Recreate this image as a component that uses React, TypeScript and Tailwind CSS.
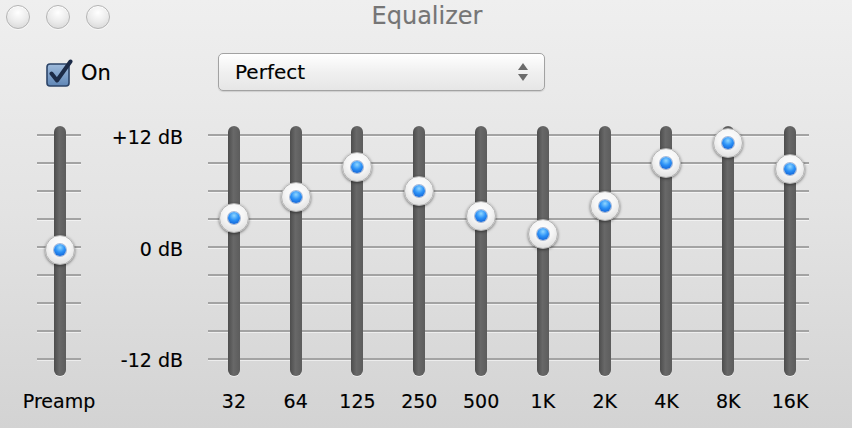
import React from 'react'

// ─── Data ─────────────────────────────────────────────────────────────────────

const BANDS: { label: string; db: number }[] = [
  { label: '32', db: 3.1 },
  { label: '64', db: 5.4 },
  { label: '125', db: 8.6 },
  { label: '250', db: 6 },
  { label: '500', db: 3.3 },
  { label: '1K', db: 1.4 },
  { label: '2K', db: 4.4 },
  { label: '4K', db: 9 },
  { label: '8K', db: 11.1 },
  { label: '16K', db: 8.4 },
]

const PREAMP_DB = -0.3
const TICKS = Array.from({ length: 9 })

// track is 250px tall, 0 dB sits 121px down, 12 dB = 112px
function knobTop(db: number) {
  return 121 - db * (112 / 12) - 15
}

// ─── Pieces ───────────────────────────────────────────────────────────────────

function TrafficLight() {
  return (
    <div className="w-[24px] h-[24px] rounded-full border border-[#b4b4b4] bg-[radial-gradient(circle_at_50%_30%,#ffffff_0%,#ececec_50%,#d2d2d2_100%)] shadow-[inset_0_1px_1px_rgba(255,255,255,0.9),0_1px_0_rgba(255,255,255,0.6)]" />
  )
}

function TickLines() {
  return (
    <div className="col-start-1 row-start-1 flex flex-col pt-[8px] gap-[26px]">
      {TICKS.map((_, i) => (
        <div key={i} className="h-[2px] bg-[#a3a3a3] shadow-[0_1px_0_rgba(255,255,255,0.55)]" />
      ))}
    </div>
  )
}

function Slider({ db }: { db: number }) {
  return (
    <div className="relative w-[12px] h-[250px] rounded-full bg-[linear-gradient(to_right,#4d4d4d,#686868_45%,#5c5c5c)] shadow-[0_1px_0_rgba(255,255,255,0.5)]">
      <div
        className="absolute left-1/2 -translate-x-1/2 w-[30px] h-[30px] rounded-full border border-[#b3b3b3] bg-[radial-gradient(circle_at_50%_35%,#ffffff_0%,#f5f5f5_45%,#d4d4d4_100%)] shadow-[0_1px_3px_rgba(0,0,0,0.5)] flex items-center justify-center"
        style={{ top: knobTop(db) }}
      >
        <div className="w-[12px] h-[12px] rounded-full bg-[radial-gradient(circle_at_50%_30%,#8fd6ff_0%,#2c92f7_45%,#0a52c9_100%)] shadow-[0_0_0_1px_rgba(10,60,150,0.35)]" />
      </div>
    </div>
  )
}

function CheckBox() {
  return (
    <svg width="28" height="28" viewBox="0 0 28 28">
      <defs>
        <linearGradient id="cb" x1="0" y1="0" x2="0" y2="1">
          <stop offset="0" stopColor="#9fbbdc" />
          <stop offset="1" stopColor="#5f86b6" />
        </linearGradient>
      </defs>
      <rect x="1" y="5" width="22" height="22" rx="3" fill="url(#cb)" stroke="#2c4468" strokeWidth="1.6" />
      <path d="M5.5 14.5 L11 21.5 L24.5 2.5" fill="none" stroke="#1c2b47" strokeWidth="4" strokeLinecap="round" strokeLinejoin="round" />
    </svg>
  )
}

// ─── App ──────────────────────────────────────────────────────────────────────

export default function App() {
  return (
    <div className="w-[852px] h-[428px] overflow-hidden bg-[linear-gradient(to_bottom,#efefef,#e3e3e3_50%,#d3d3d3)] text-black font-['DejaVu_Sans',sans-serif] [-webkit-text-stroke:0.15px_currentColor]">
      {/* Title bar */}
      <div className="h-[32px] grid grid-cols-[1fr_auto_1fr] items-center">
        <div className="flex gap-[16px] pl-[6px] pt-[1px]">
          <TrafficLight />
          <TrafficLight />
          <TrafficLight />
        </div>
        <div className="text-[24px] text-[#757575] leading-none pl-[2px]">Equalizer</div>
        <div />
      </div>

      {/* Controls */}
      <div className="flex items-center mt-[21px] h-[38px]">
        <div className="flex items-center gap-[7px] pl-[46px] w-[218px] pt-[2px]">
          <CheckBox />
          <span className="text-[21px] leading-none">On</span>
        </div>
        <div className="w-[327px] h-[38px] rounded-[5px] border border-[#a2a2a2] bg-[linear-gradient(to_bottom,#ffffff,#f0f0f0_50%,#e6e6e6)] shadow-[0_1px_1px_rgba(0,0,0,0.12)] flex items-center justify-between pl-[16px] pr-[16px]">
          <span className="text-[20px] leading-none">Perfect</span>
          <div className="flex flex-col items-center gap-[4px]">
            <div className="w-0 h-0 border-l-[5px] border-r-[5px] border-b-[7px] border-l-transparent border-r-transparent border-b-[#6b6b6b]" />
            <div className="w-0 h-0 border-l-[5px] border-r-[5px] border-t-[7px] border-l-transparent border-r-transparent border-t-[#6b6b6b]" />
          </div>
        </div>
      </div>

      {/* Sliders */}
      <div className="flex mt-[35px] h-[250px]">
        <div className="ml-[37px] w-[44px] grid">
          <TickLines />
          <div className="col-start-1 row-start-1 flex justify-center pl-[1px]">
            <Slider db={PREAMP_DB} />
          </div>
        </div>
        <div className="w-[102px] h-[245px] flex flex-col justify-between items-end text-[19px] leading-[22px]">
          <span>+12 dB</span>
          <span>0 dB</span>
          <span>-12 dB</span>
        </div>
        <div className="ml-[20px] w-[618px] grid">
          <div className="col-start-1 row-start-1 ml-[5px] w-[601px] grid">
            <TickLines />
          </div>
          <div className="col-start-1 row-start-1 grid grid-cols-10">
            {BANDS.map((b) => (
              <div key={b.label} className="flex justify-center">
                <Slider db={b.db} />
              </div>
            ))}
          </div>
        </div>
      </div>

      {/* Labels */}
      <div className="flex mt-[14px] text-[19px] leading-[22px]">
        <div className="ml-[37px] w-[44px] flex justify-center whitespace-nowrap">Preamp</div>
        <div className="w-[102px]" />
        <div className="ml-[20px] w-[618px] grid grid-cols-10">
          {BANDS.map((b) => (
            <div key={b.label} className="text-center">{b.label}</div>
          ))}
        </div>
      </div>
    </div>
  )
}
